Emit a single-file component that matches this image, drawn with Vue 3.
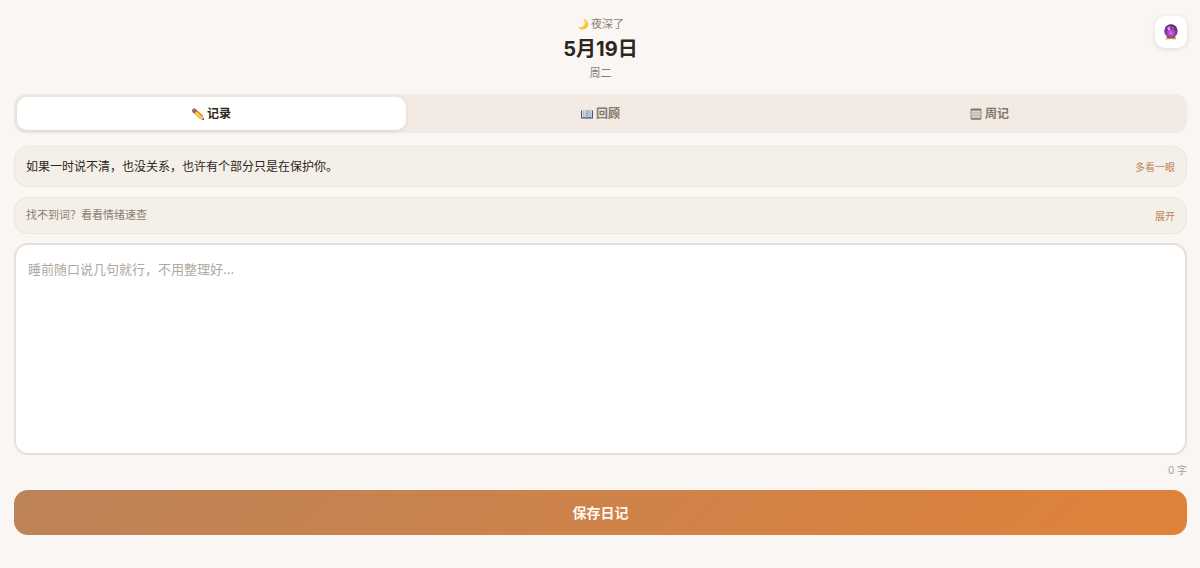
<script setup>
import { ref } from 'vue'

const active = ref('write')
const text = ref('')
const tabs = [
  { id: 'write', label: '记录' },
  { id: 'review', label: '回顾' },
  { id: 'weekly', label: '周记' },
]
</script>

<template>
  <main class="page">
    <header class="header">
      <p class="greeting">
        <svg class="icon" viewBox="0 0 24 24" aria-hidden="true">
          <path d="M13 1C20 3 24 9 22 15C19 24 7 25 1 18C8 19 14 17 15 11C16 7 15 4 13 1Z" fill="#fbd34f" />
          <path d="M20 7C22 15 15 21 5 21C12 25 20 21 22 15C23 12 22 9 20 7Z" fill="#efb93c" />
        </svg>
        <span>夜深了</span>
      </p>
      <h1 class="date">5月19日</h1>
      <p class="weekday">周二</p>
      <button class="oracle" type="button" aria-label="水晶球">
        <svg viewBox="0 0 24 24" aria-hidden="true">
          <defs>
            <radialGradient id="orb" cx="50%" cy="65%" r="58%">
              <stop offset="0" stop-color="#dc72ea" />
              <stop offset="0.5" stop-color="#a03bbd" />
              <stop offset="1" stop-color="#55216f" />
            </radialGradient>
          </defs>
          <path d="M6 18H18L20 23H15L12 22L9 23H4Z" fill="#b9782d" />
          <path d="M5 21L8 20L9 22L4 23ZM16 20L19 21L20 23L15 22Z" fill="#e6b45b" />
          <circle cx="12" cy="10.500" r="10" fill="url(#orb)" />
          <path d="M5 8Q7 3 12 3L10 6L7 7Z" fill="#d38be6" />
          <circle cx="9" cy="8" r="1.500" fill="#f8d8ff" />
          <circle cx="15" cy="5" r="1" fill="#e3a0f0" />
          <path d="M7 19Q12 22 17 19L18 21H6Z" fill="#865021" />
        </svg>
      </button>
    </header>

    <nav class="tabs" aria-label="日记">
      <button
        v-for="tab in tabs"
        :key="tab.id"
        type="button"
        class="tab"
        :class="{ active: active === tab.id }"
        :aria-pressed="active === tab.id"
        @click="active = tab.id"
      >
        <svg v-if="tab.id === 'write'" class="icon" viewBox="0 0 24 24" aria-hidden="true">
          <path d="M7 2L22 16L24 24L16 22L1 8Z" fill="#d99a22" />
          <path d="M7 4L21 17L17 21L3 8Z" fill="#ffd13d" />
          <path d="M7 2L22 16L21 18L6 4Z" fill="#b98022" />
          <path d="M0 4Q2 -1 6 1L9 4L3 10L1 8Q-1 6 0 4Z" fill="#b0646c" />
          <path d="M7 3L10 6L5 11L2 8Z" fill="#77736f" />
          <path d="M22 16L24 24L16 22Z" fill="#ecc899" />
          <path d="M23 20L24 24L20 23Z" fill="#38322d" />
        </svg>
        <svg v-else-if="tab.id === 'review'" class="icon" viewBox="0 0 24 24" aria-hidden="true">
          <path d="M0 5H24V21H14L12 22L10 21H0Z" fill="#435778" />
          <path d="M2 3Q8 2 12 5V20Q8 17 2 19Z" fill="#e1e5ec" />
          <path d="M12 5Q16 2 22 3V19Q16 17 12 20Z" fill="#ced6e1" />
          <path d="M5 5V17M8 5V17M16 5V17M19 5V17" stroke="#9ca8b9" stroke-width="1.500" />
          <path d="M12 5V20" stroke="#536078" stroke-width="1.500" />
        </svg>
        <svg v-else class="icon" viewBox="0 0 24 24" aria-hidden="true">
          <path d="M2 2H22V22H2Z" fill="#d6d3cb" stroke="#8d8981" stroke-width="2" />
          <path d="M2 2H22V5H2Z" fill="#777269" />
          <path d="M5 9H19M5 12H19M5 15H19M5 18H19" stroke="#b5b2ac" stroke-width="1" />
          <path d="M2 22H22" stroke="#6b655c" stroke-width="2" />
        </svg>
        <span>{{ tab.label }}</span>
      </button>
    </nav>

    <section class="card hint">
      <p>如果一时说不清，也没关系，也许有个部分只是在保护你。</p>
      <button type="button" class="more">多看一眼</button>
    </section>

    <section class="card lookup">
      <p>找不到词？看看情绪速查</p>
      <button type="button" class="more">展开</button>
    </section>

    <textarea
      v-model="text"
      class="entry"
      aria-label="日记内容"
      placeholder="睡前随口说几句就行，不用整理好..."
    ></textarea>
    <p class="count">{{ text.length }} 字</p>
    <button type="button" class="save">保存日记</button>
  </main>
</template>

<style>
body {
  background: #faf6f3;
}
</style>

<style scoped>
.page {
  box-sizing: border-box;
  min-height: 100vh;
  padding: 16px 13px 32px 14px;
  display: flex;
  flex-direction: column;
  background: #faf6f3;
  color: #2c2620;
  font-family: Inter, "Noto Sans CJK SC", sans-serif;
}
p,
h1 {
  margin: 0;
}
button {
  border: 0;
  margin: 0;
  padding: 0;
  background: none;
  font-family: inherit;
  cursor: pointer;
}
.header {
  position: relative;
  display: flex;
  flex-direction: column;
  align-items: center;
  margin-bottom: 13px;
}
.greeting,
.weekday {
  font-size: 11px;
  line-height: 16px;
  color: #8a7d71;
}
.greeting {
  display: flex;
  align-items: center;
  gap: 2px;
}
.icon {
  width: 12px;
  height: 12px;
  flex: none;
}
.date {
  padding-top: 1px;
  font-size: 20px;
  line-height: 32px;
  font-weight: 700;
}
.oracle {
  position: absolute;
  top: 0;
  right: 0;
  width: 32px;
  height: 32px;
  display: flex;
  align-items: center;
  justify-content: center;
  border-radius: 10px;
  background: #fff;
  box-shadow: 0 1px 5px rgba(80, 55, 30, 0.14);
}
.oracle svg {
  width: 16px;
  height: 16px;
}
.tabs {
  display: flex;
  padding: 3px;
  margin-bottom: 13px;
  border-radius: 12px;
  background: #f2eae3;
}
.tab {
  flex: 1;
  display: flex;
  align-items: center;
  justify-content: center;
  gap: 3px;
  height: 33px;
  border-radius: 10px;
  font-size: 12px;
  line-height: 18px;
  font-weight: 600;
  color: #85786c;
}
.tab.active {
  background: #fff;
  color: #2c2620;
  box-shadow: 0 1px 4px rgba(80, 55, 30, 0.12);
}
.card {
  display: flex;
  align-items: center;
  justify-content: space-between;
  padding: 9px 11px;
  border: 1px solid #f0e3db;
  border-radius: 14px;
  background: #f5efe9;
}
.hint {
  margin-bottom: 10px;
  font-size: 12px;
  line-height: 21px;
}
.lookup {
  margin-bottom: 9px;
  font-size: 11px;
  line-height: 17px;
  color: #8a7d71;
}
.more {
  font-size: 10px;
  line-height: 16px;
  color: #bd8558;
}
.entry {
  box-sizing: border-box;
  display: block;
  width: 100%;
  height: 212px;
  margin: 0;
  padding: 13px 12px;
  border: 2px solid #e8e0d8;
  border-radius: 14px;
  outline: none;
  resize: none;
  background: #fff;
  color: inherit;
  font-family: inherit;
  font-size: 13px;
  line-height: 22px;
}
.entry::placeholder {
  color: #b0a8a0;
  opacity: 1;
}
.count {
  margin: 8px 0 13px;
  text-align: right;
  font-size: 10px;
  line-height: 14px;
  color: #a79c91;
}
.save {
  height: 45px;
  border-radius: 14px;
  background: linear-gradient(135deg, #bd8359, #df823a);
  color: #fff8ef;
  font-size: 14px;
  line-height: 20px;
  font-weight: 600;
}
</style>
